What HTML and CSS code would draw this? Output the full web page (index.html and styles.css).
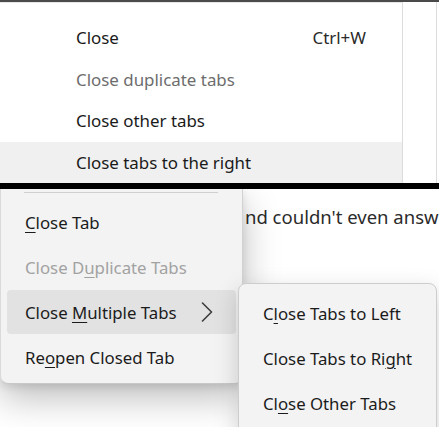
FILE: index.html
```html
<!DOCTYPE html>
<html lang="en">
<head>
<meta charset="utf-8">
<link rel="stylesheet" href="styles.css">
</head>
<body>
<div class="screen">
  <section class="top">
    <div class="old-menu">
      <div class="old-item"><span>Close</span><span class="kbd">Ctrl+W</span></div>
      <div class="old-item is-disabled"><span>Close duplicate tabs</span></div>
      <div class="old-item"><span>Close other tabs</span></div>
      <div class="old-item is-hover"><span>Close tabs to the right</span></div>
    </div>
    <div class="old-gap"></div>
  </section>
  <div class="divider"></div>
  <section class="bottom">
    <div class="menu">
      <div class="sep"></div>
      <div class="item"><span><u>C</u>lose Tab</span></div>
      <div class="item is-disabled"><span>Close D<u>u</u>plicate Tabs</span></div>
      <div class="item is-active"><span>Close <u>M</u>ultiple Tabs</span>
        <svg class="chev" width="12" height="20" viewBox="0 0 12 20"><path d="M1.5 1 L10.5 10 L1.5 19" fill="none" stroke="#3d3d3d" stroke-width="1.6" stroke-linecap="round" stroke-linejoin="round"/></svg>
      </div>
      <div class="item"><span>Re<u>o</u>pen Closed Tab</span></div>
    </div>
    <div class="page">
      <p class="page-text">nd couldn't even answ</p>
    </div>
    <div class="submenu">
      <div class="item"><span>C<u>l</u>ose Tabs to Left</span></div>
      <div class="item"><span>Close Tabs to Ri<u>g</u>ht</span></div>
      <div class="item"><span>Cl<u>o</u>se Other Tabs</span></div>
    </div>
  </section>
</div>
</body>
</html>
```

FILE: styles.css
```css
* { box-sizing: border-box; }
html, body { margin: 0; padding: 0; background: #fff; }
body { font-family: "Noto Sans", "Open Sans", sans-serif; color: #1b1b1b; }

.screen {
  width: 439px;
  height: 427px;
  overflow: hidden;
  display: flex;
  flex-direction: column;
}

/* ---------- top: old-style menu ---------- */
.top {
  height: 183px;
  display: flex;
  border-top: 2px solid #4a4a4a;
  background: #fff;
  flex-shrink: 0;
}
.old-menu {
  width: 403px;
  border-right: 1px solid #dcdcdc;
  border-top: 1px solid #e6e6e6;
  padding-top: 14px;
  display: flex;
  flex-direction: column;
}
.old-item {
  height: 42px;
  display: flex;
  align-items: center;
  justify-content: space-between;
  padding: 0 36px 0 76px;
  font-size: 16.9px;
  color: #1a1a1a;
}
.old-item.is-disabled { color: #6d6d6d; }
.old-item.is-hover { background: #f0f0f0; }
.kbd { color: #2a2a2a; }
.old-gap {
  width: 34px;
  border-right: 1px solid #dcdcdc;
}

.divider {
  height: 6px;
  background: #000;
  flex-shrink: 0;
}

/* ---------- bottom: new-style menu ---------- */
.bottom {
  flex: 1;
  display: flex;
  position: relative;
  background: #fff;
  overflow: hidden;
}
.menu {
  width: 243px;
  align-self: flex-start;
  background: #f3f3f3;
  border-left: 1px solid #dadada;
  border-right: 1px solid #d2d2d2;
  border-bottom: 1px solid #c8c8c8;
  border-radius: 0 0 8px 8px;
  padding: 0 0 3px;
  box-shadow: 0 14px 36px rgba(0,0,0,0.26), 0 3px 8px rgba(0,0,0,0.10);
  position: relative;
  z-index: 2;
}
.sep {
  height: 1px;
  background: #cfcfcf;
  margin: 3px 24px 7px 23px;
}
.item {
  height: 45px;
  margin: 0 6px;
  padding: 0 0 0 18px;
  border-radius: 4px;
  display: flex;
  align-items: center;
  justify-content: space-between;
  font-size: 16.8px;
  color: #1b1b1b;
  white-space: nowrap;
}
.item u { text-underline-offset: 3px; text-decoration-thickness: 1px; }
.item.is-disabled { color: #a2a2a2; }
.item.is-active { background: #e2e2e2; height: 44px; margin-bottom: 1px; }
.chev { margin-right: 23px; }

.page {
  flex: 1;
  padding: 16px 0 0 2px;
  overflow: hidden;
  white-space: nowrap;
}
.page-text {
  margin: 0;
  font-size: 18.5px;
  line-height: 24px;
  color: #2b2b2b;
}

.submenu {
  position: absolute;
  left: 238px;
  top: 94px;
  width: 199px;
  height: 160px;
  background: #f3f3f3;
  border: 1px solid #cdcdcd;
  border-radius: 8px 8px 0 0;
  padding-top: 7px;
  box-shadow: 0 8px 24px rgba(0,0,0,0.18);
  z-index: 3;
}
```
